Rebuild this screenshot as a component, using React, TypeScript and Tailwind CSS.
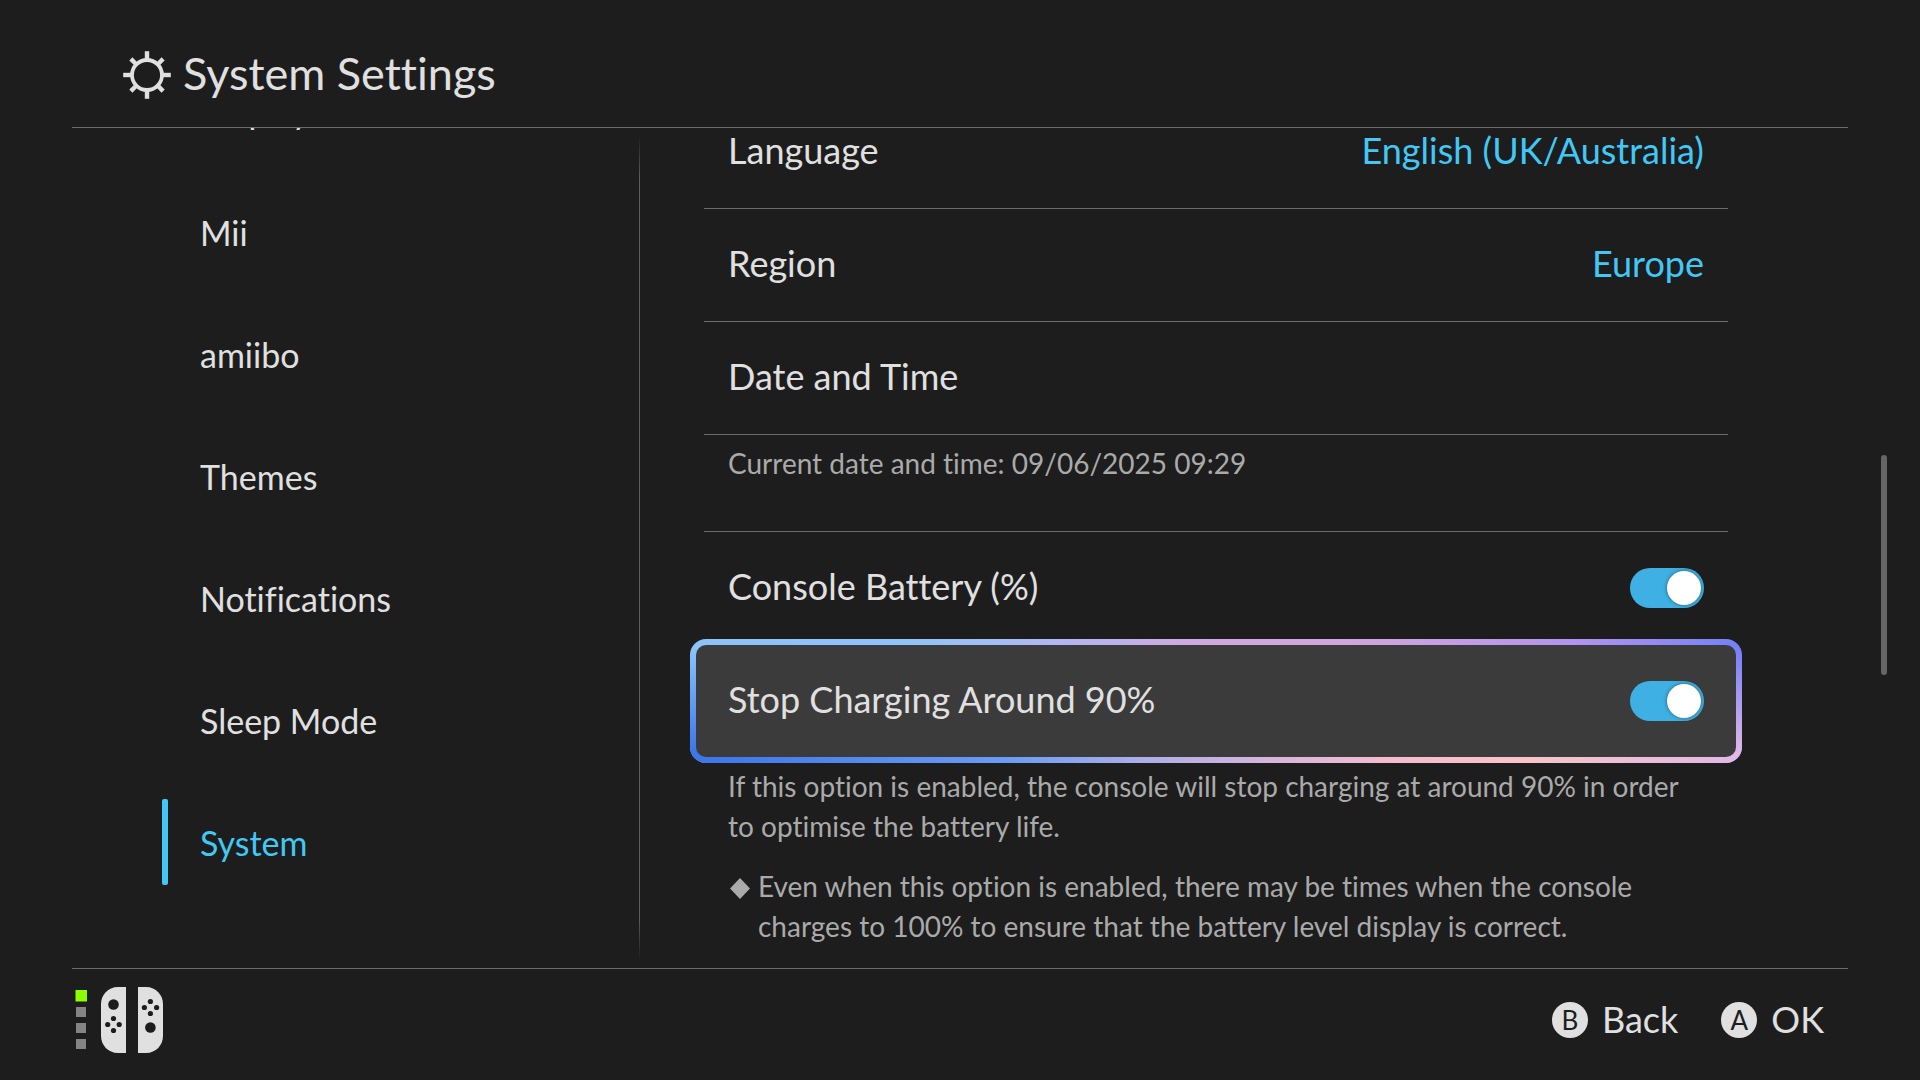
import React from "react";

const sections = ["Display", "Mii", "amiibo", "Themes", "Notifications", "Sleep Mode", "System"];
const activeSection = "System";

function SunIcon() {
  const angles = [0, 45, 90, 135, 180, 225, 270, 315];
  return (
    <svg viewBox="0 0 48 48" className="size-12 shrink-0" fill="none" stroke="currentColor" aria-hidden="true">
      <circle cx="24" cy="24" r="15" strokeWidth="3.8" />
      {angles.map((a) => (
        <line key={a} x1="24" y1={a % 90 ? 1.2 : 0.2} x2="24" y2="8" strokeWidth="4.4" transform={`rotate(${a} 24 24)`} />
      ))}
    </svg>
  );
}

function ControllerIcon() {
  return (
    <svg viewBox="0 0 90 68" className="h-[68px] w-[90px]" role="img" aria-label="Player 1 controllers">
      <rect x="0.5" y="4" width="11.5" height="11.5" fill="#8cff00" />
      <rect x="1" y="21" width="10" height="10" fill="#848484" />
      <rect x="1" y="37" width="10" height="10" fill="#848484" />
      <rect x="1" y="53" width="10" height="10" fill="#848484" />
      <path d="M51 1V67H43C33 67 26 59 26 50V18C26 9 33 1 43 1Z" fill="#e0e0e0" />
      <path d="M63 1V67H71C81 67 88 59 88 50V18C88 9 81 1 71 1Z" fill="#e0e0e0" />
      <g fill="#1d1d1d">
        <circle cx="38.5" cy="18.5" r="5.3" />
        <circle cx="38.5" cy="32.5" r="2.6" />
        <circle cx="32.7" cy="38.5" r="2.6" />
        <circle cx="44.2" cy="38.5" r="2.6" />
        <circle cx="38.5" cy="44.5" r="2.6" />
        <circle cx="75.4" cy="15.5" r="2.6" />
        <circle cx="69.4" cy="21.5" r="2.6" />
        <circle cx="81.6" cy="21.5" r="2.6" />
        <circle cx="75.4" cy="27.5" r="2.6" />
        <circle cx="75.4" cy="41.5" r="5.3" />
      </g>
    </svg>
  );
}

function Toggle({ id }: { id: string }) {
  return (
    <input
      id={id}
      type="checkbox"
      role="switch"
      defaultChecked
      className="flex h-10 w-[74px] shrink-0 cursor-pointer appearance-none items-center rounded-full bg-[#6b6b6b] px-[3px] before:size-[34px] before:rounded-full before:bg-white before:shadow-[0_0_4px_rgba(0,0,0,0.45)] before:content-[''] checked:justify-end checked:bg-[#3fb0e3]"
    />
  );
}

function ValueRow({ label, value }: { label: string; value?: string }) {
  return (
    <button
      type="button"
      className="flex h-[113px] w-full items-center justify-between border-b border-[#6b6b6b] px-6 pb-1 text-left text-[36px]"
    >
      <span>{label}</span>
      {value && <span className="text-[#42c8f5]">{value}</span>}
    </button>
  );
}

function KeyHint({ letter, label }: { letter: string; label: string }) {
  return (
    <button type="button" className="flex items-center gap-3.5 text-[36px] leading-10">
      <span className="flex size-9 items-center justify-center rounded-full bg-[#e0e0e0] text-[26px] leading-9 text-[#1d1d1d]">
        {letter}
      </span>
      <span className="pb-0.5">{label}</span>
    </button>
  );
}

export default function App() {
  return (
    <div className="flex h-screen flex-col overflow-hidden bg-[#1d1d1d] font-['Lato','Noto_Sans',sans-serif] text-[#e0e0e0] [font-variant-ligatures:none]">
      <header className="mx-[72px] flex h-32 shrink-0 items-center gap-3 border-b border-[#6b6b6b] pt-[22px] pl-[51px]">
        <SunIcon />
        <h1 className="pb-1 text-[45px] leading-[54px]">System Settings</h1>
      </header>

      <main className="flex min-h-0 flex-1 overflow-hidden pl-[72px]">
        <nav aria-label="Settings sections" className="-mt-[79px] w-[567px] shrink-0 pl-[90px]">
          {sections.map((name) => (
            <a
              key={name}
              href="#"
              aria-current={name === activeSection ? "page" : undefined}
              className="group flex h-[122px] items-center gap-8 text-[34px] aria-[current=page]:text-[#42c8f5]"
            >
              <span className="h-[86px] w-1.5 rounded-xs group-aria-[current=page]:bg-[#42c8f5]" />
              {name}
            </a>
          ))}
        </nav>

        <div className="my-2 w-px shrink-0 bg-[linear-gradient(to_bottom,transparent,#5c5c5c_5%,#5c5c5c_95%,transparent)]" />

        <section aria-label="System" className="-mt-8 min-w-0 flex-1 pr-[153px] pl-16">
          <ValueRow label="Language" value="English (UK/Australia)" />
          <ValueRow label="Region" value="Europe" />
          <ValueRow label="Date and Time" />
          <p className="h-[97px] border-b border-[#6b6b6b] px-6 pt-2 text-[28px] leading-10 text-[#aaaaaa]">
            Current date and time: 09/06/2025 09:29
          </p>

          <div className="flex h-[107px] items-center justify-between px-6 pt-1 text-[36px]">
            <label htmlFor="battery" className="pb-1">
              Console Battery (%)
            </label>
            <Toggle id="battery" />
          </div>

          <div className="relative -mx-3.5 overflow-hidden rounded-[16px] bg-[linear-gradient(to_right,#8cc4f8,#8fc4f8_20%,#b0b8f4_34%,#d2a8dc_50%,#d0a4de_65%,#b294ee_84%,#7480f8)] p-1.5">
            <span
              aria-hidden="true"
              className="absolute inset-0 bg-[linear-gradient(to_right,#3c74ea,#6a9cf6_30%,#a8aeea_42%,#d4b4de_54%,#f4bcd0_66%,#f8c4c8_80%,#e0b8e8)] [mask-image:linear-gradient(to_bottom,transparent_8%,black_92%)]"
            />
            <div className="relative flex h-28 items-center justify-between rounded-[10px] bg-[#3b3b3b] px-8 text-[36px]">
              <label htmlFor="charge-limit" className="pb-1">
                Stop Charging Around 90%
              </label>
              <Toggle id="charge-limit" />
            </div>
          </div>

          <div className="px-6 pt-[3px] text-[28px] leading-10 text-[#aaaaaa]">
            <p>If this option is enabled, the console will stop charging at around 90% in order to optimise the battery life.</p>
            <div className="mt-5 flex gap-2">
              <svg viewBox="0 0 22 40" className="h-10 w-[22px] shrink-0" fill="currentColor" aria-hidden="true">
                <path d="M12 12L22 22.5L12 33L2 22.5Z" />
              </svg>
              <p>
                Even when this option is enabled, there may be times when the console charges to 100% to ensure that the
                battery level display is correct.
              </p>
            </div>
          </div>
        </section>

        <div aria-hidden="true" className="mt-[327px] mr-[33px] h-[220px] w-1.5 shrink-0 rounded-full bg-[#666666]" />
      </main>

      <footer className="mx-[72px] flex h-28 shrink-0 items-center justify-between border-t border-[#6b6b6b] pr-6 pb-2.5 pl-[3px]">
        <ControllerIcon />
        <div className="flex gap-[43px]">
          <KeyHint letter="B" label="Back" />
          <KeyHint letter="A" label="OK" />
        </div>
      </footer>
    </div>
  );
}
